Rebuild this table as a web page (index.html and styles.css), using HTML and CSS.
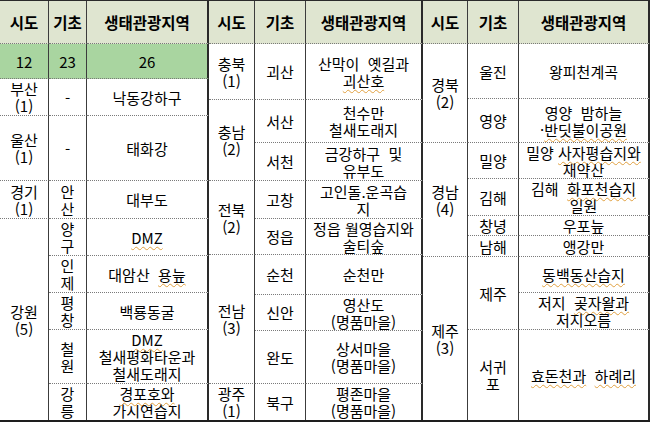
FILE: index.html
```html
<!DOCTYPE html>
<html lang="ko">
<head>
<meta charset="utf-8">
<title>생태관광지역</title>
<link rel="stylesheet" href="styles.css">
</head>
<body>
<div class="sheet">
  <div class="tbl tbl-left">
    <div class="cell hd c1"><div class="t">시도</div></div>
    <div class="cell hd c2"><div class="t">기초</div></div>
    <div class="cell hd c3"><div class="t">생태관광지역</div></div>

    <div class="cell sum c1"><div class="t">12</div></div>
    <div class="cell sum c2"><div class="t">23</div></div>
    <div class="cell sum c3"><div class="t">26</div></div>

    <div class="cell c1"><div class="t">부산<br>(1)</div></div>
    <div class="cell c2"><div class="t">-</div></div>
    <div class="cell c3"><div class="t">낙동강하구</div></div>

    <div class="cell c1"><div class="t">울산<br>(1)</div></div>
    <div class="cell c2"><div class="t">-</div></div>
    <div class="cell c3"><div class="t">태화강</div></div>

    <div class="cell c1"><div class="t">경기<br>(1)</div></div>
    <div class="cell c2"><div class="t">안<br>산</div></div>
    <div class="cell c3"><div class="t">대부도</div></div>

    <div class="cell c1 span5 last"><div class="t">강원<br>(5)</div></div>
    <div class="cell c2"><div class="t">양<br>구</div></div>
    <div class="cell c3"><div class="t"><span class="sp">DMZ</span></div></div>

    <div class="cell c2"><div class="t">인<br>제</div></div>
    <div class="cell c3"><div class="t">대암산&nbsp; <span class="sp">용늪</span></div></div>

    <div class="cell c2"><div class="t">평<br>창</div></div>
    <div class="cell c3"><div class="t">백룡동굴</div></div>

    <div class="cell c2"><div class="t">철<br>원</div></div>
    <div class="cell c3"><div class="t"><span class="sp">DMZ</span><br>철새평화타운과<br>철새도래지</div></div>

    <div class="cell c2 last"><div class="t">강<br>릉</div></div>
    <div class="cell c3 last"><div class="t"><span class="sp">경포호와</span><br>가시연습지</div></div>
  </div>

  <div class="tbl tbl-mid">
    <div class="cell hd c1"><div class="t">시도</div></div>
    <div class="cell hd c2"><div class="t">기초</div></div>
    <div class="cell hd c3"><div class="t">생태관광지역</div></div>

    <div class="cell c1"><div class="t">충북<br>(1)</div></div>
    <div class="cell c2"><div class="t">괴산</div></div>
    <div class="cell c3"><div class="t">산막이&nbsp; 옛길과<br><span class="sp">괴산호</span></div></div>

    <div class="cell c1 span2"><div class="t">충남<br>(2)</div></div>
    <div class="cell c2"><div class="t">서산</div></div>
    <div class="cell c3"><div class="t">천수만<br>철새도래지</div></div>

    <div class="cell c2"><div class="t">서천</div></div>
    <div class="cell c3"><div class="t">금강하구&nbsp; 및<br>유부도</div></div>

    <div class="cell c1 span2"><div class="t">전북<br>(2)</div></div>
    <div class="cell c2"><div class="t">고창</div></div>
    <div class="cell c3"><div class="t">고인돌.운곡습<br>지</div></div>

    <div class="cell c2"><div class="t">정읍</div></div>
    <div class="cell c3"><div class="t">정읍 월영습지와<br><span class="sp">술티숲</span></div></div>

    <div class="cell c1 span3"><div class="t">전남<br>(3)</div></div>
    <div class="cell c2"><div class="t">순천</div></div>
    <div class="cell c3"><div class="t">순천만</div></div>

    <div class="cell c2"><div class="t">신안</div></div>
    <div class="cell c3"><div class="t">영산도<br>(명품마을)</div></div>

    <div class="cell c2"><div class="t">완도</div></div>
    <div class="cell c3"><div class="t">상서마을<br>(명품마을)</div></div>

    <div class="cell c1 last"><div class="t">광주<br>(1)</div></div>
    <div class="cell c2 last"><div class="t">북구</div></div>
    <div class="cell c3 last"><div class="t">평존마을<br>(명품마을)</div></div>
  </div>

  <div class="tbl tbl-right">
    <div class="cell hd c1"><div class="t">시도</div></div>
    <div class="cell hd c2"><div class="t">기초</div></div>
    <div class="cell hd c3"><div class="t">생태관광지역</div></div>

    <div class="cell c1 span2"><div class="t">경북<br>(2)</div></div>
    <div class="cell c2"><div class="t">울진</div></div>
    <div class="cell c3"><div class="t">왕피천계곡</div></div>

    <div class="cell c2"><div class="t">영양</div></div>
    <div class="cell c3"><div class="t">영양&nbsp; 밤하늘<br>·<span class="sp">반딧불이공원</span></div></div>

    <div class="cell c1 span4"><div class="t">경남<br>(4)</div></div>
    <div class="cell c2"><div class="t">밀양</div></div>
    <div class="cell c3"><div class="t">밀양 <span class="sp">사자평습지와</span><br><span class="sp">재약산</span></div></div>

    <div class="cell c2"><div class="t">김해</div></div>
    <div class="cell c3"><div class="t">김해&nbsp; <span class="sp">화포천습지</span><br>일원</div></div>

    <div class="cell c2"><div class="t">창녕</div></div>
    <div class="cell c3"><div class="t"><span class="sp">우포늪</span></div></div>

    <div class="cell c2"><div class="t">남해</div></div>
    <div class="cell c3"><div class="t"><span class="sp">앵강만</span></div></div>

    <div class="cell c1 span3 last"><div class="t">제주<br>(3)</div></div>
    <div class="cell c2 span2"><div class="t">제주</div></div>
    <div class="cell c3"><div class="t"><span class="sp">동백동산습지</span></div></div>

    <div class="cell c3"><div class="t">저지&nbsp; <span class="sp">곶자왈과</span><br><span class="sp">저지오름</span></div></div>

    <div class="cell c2 last"><div class="t">서귀<br>포</div></div>
    <div class="cell c3 last"><div class="t"><span class="sp">효돈천과</span>&nbsp; <span class="sp">하례리</span></div></div>
  </div>
</div>
</body>
</html>
```

FILE: styles.css
```css
* {
  box-sizing: border-box;
}

html, body {
  margin: 0;
  padding: 0;
  background: #ffffff;
}

body {
  font-family: "Noto Sans CJK KR", "Noto Sans", sans-serif;
  font-size: 15px;
  line-height: 17px;
  color: #000000;
}

.sheet {
  width: 650px;
  height: 422px;
  display: flex;
  border-top: 1px solid #2a2a2a;
  border-bottom: 2px solid #1e1e1e;
  overflow: hidden;
}

.tbl {
  display: grid;
  height: 419px;
}

.tbl-left {
  width: 209px;
  grid-template-columns: 49px 38px 122px;
  grid-template-rows: 43px 35px 37px 65px 38px 37px 37px 37px 54px 36px;
}

.tbl-mid {
  width: 214px;
  grid-template-columns: 46px 51px 117px;
  grid-template-rows: 43px 56px 43px 38px 38px 36px 40px 36px 53px 36px;
}

.tbl-right {
  width: 227px;
  grid-template-columns: 45px 51px 131px;
  grid-template-rows: 43px 55px 44px 36px 37px 20px 21px 36px 37px 90px;
}

.cell {
  display: flex;
  align-items: center;
  justify-content: center;
  text-align: center;
  border-bottom: 1px dotted #7a7a7a;
  overflow: hidden;
  min-width: 0;
  min-height: 0;
}

.t {
  white-space: nowrap;
  line-height: 17px;
}

.cell.last {
  border-bottom: none;
}

.c1, .c2 {
  border-right: 1px solid #3c3c3c;
}

.c3 {
  border-right: 2px solid #2a2a2a;
}

.hd {
  background: #dfe5d0;
  font-weight: bold;
  font-size: 15.5px;
}

.sum {
  background: #a9d5a0;
}

.span2 { grid-row: span 2; }
.span3 { grid-row: span 3; }
.span4 { grid-row: span 4; }
.span5 { grid-row: span 5; }

.sp {
  text-decoration: underline wavy #e0a040;
  text-decoration-thickness: 1px;
  text-underline-offset: 2px;
}
```
